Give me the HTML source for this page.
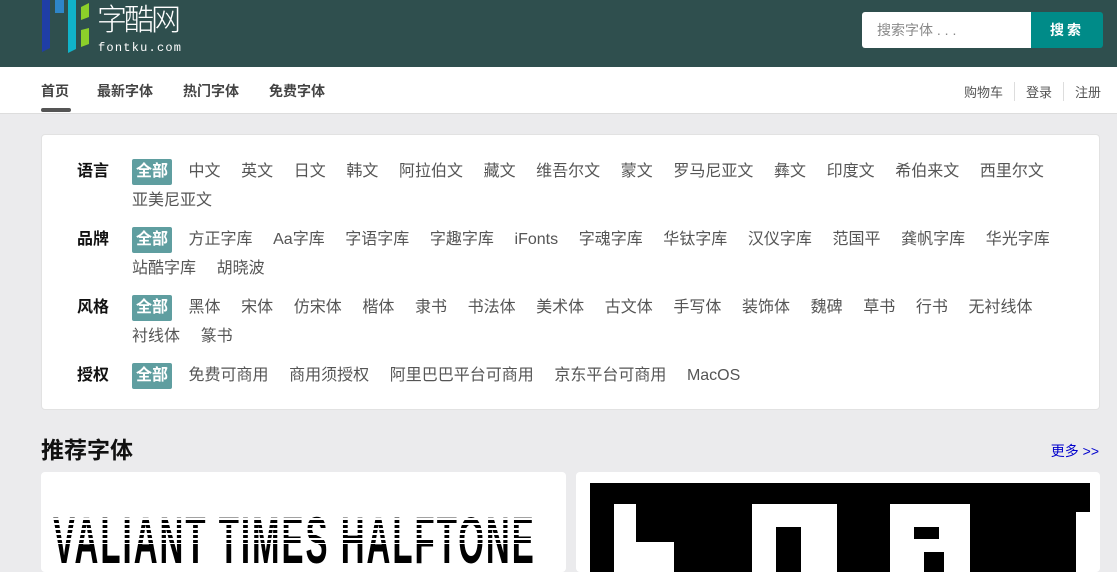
<!DOCTYPE html>
<html><head><meta charset="utf-8"><style>
*{margin:0;padding:0;box-sizing:border-box}
body{width:1117px;height:568px;overflow:hidden;background:#ebebed;font-family:"Liberation Sans","Noto Sans CJK SC",sans-serif}
.top{height:67px;background:#2f4f4e;position:relative}
.logo{position:absolute;left:40px;top:0}
.search{position:absolute;left:862px;top:12px;width:241px;height:36px;border-radius:3px;overflow:hidden;display:flex}
.search .in{width:169px;background:#fff;color:#888;font-size:14px;line-height:36px;padding-left:15px}
.search .bt{flex:1;background:#008b88;color:#fff;font-weight:bold;font-size:14px;line-height:36px;text-align:center;letter-spacing:3px}
.nav{height:47px;background:#fff;position:relative;border-bottom:1px solid #ddd}
.nav a{position:absolute;top:14px;font-size:14px;font-weight:bold;color:#444}
.nav .u{position:absolute;left:41px;top:41px;width:30px;height:4px;border-radius:2px;background:#555}
.nr{position:absolute;right:16px;top:15px;font-size:13px;color:#555;display:flex}
.nr span{padding:0 11px;border-left:1px solid #ddd}
.nr span:first-child{border:none}
.nr span:last-child{padding-right:0}
.card{position:absolute;left:41px;top:134px;width:1059px;height:276px;background:#fff;border-radius:4px;border:1px solid #e2e2e2}
.row{position:absolute;left:35px;display:flex}
.row b{width:55px;font-size:16px;line-height:29px;color:#111}
.items{width:950px;font-size:16px;line-height:29px;color:#555}
.items span{margin-right:20.6px;white-space:nowrap;display:inline-block}
.items .on{background:#5f9ea0;color:#fff;font-weight:bold;padding:0 4px;border-radius:2px;margin-right:16.5px;line-height:26px}
h2{position:absolute;left:41px;top:431px;font-size:23px;color:#111}
.more{position:absolute;right:18px;top:441px;font-size:14px;color:#00c}
.c1{position:absolute;left:41px;top:472px;width:525px;height:100px;background:#fff;border-radius:4px;overflow:hidden}
.c2{position:absolute;left:576px;top:472px;width:524px;height:100px;background:#fff;border-radius:4px;overflow:hidden}
</style></head><body>
<div class="top">
<svg class="logo" width="150" height="55" viewBox="0 0 150 55">
<polygon points="2,0 10,0 10,48 2,52" fill="#1f3ea6"/>
<polygon points="15,0 24,0 24,13 15,13" fill="#2e86c9"/>
<polygon points="28,0 36,0 36,49 28,53" fill="#10b3c9"/>
<polygon points="41,7 49,3 49,17 41,20" fill="#8ccf2a"/>
<polygon points="41,30 49,28 49,44 41,47" fill="#8ccf2a"/>
<text x="57" y="30" font-size="30" fill="#fff" font-family="Noto Sans CJK SC,sans-serif" font-weight="300" textLength="84">字酷网</text>
<text x="58" y="51" font-size="12" fill="#fff" font-family="Liberation Mono,monospace" textLength="83">fontku.com</text>
</svg>
<div class="search"><div class="in">搜索字体 . . .</div><div class="bt">搜索</div></div>
</div>
<div class="nav">
<a style="left:41px">首页</a><a style="left:97px">最新字体</a><a style="left:183px">热门字体</a><a style="left:269px">免费字体</a>
<div class="u"></div>
<div class="nr"><span>购物车</span><span>登录</span><span>注册</span></div>
</div>
<div class="card">
<div class="row" style="top:22px"><b>语言</b><div class="items"><span class="on">全部</span><span>中文</span><span>英文</span><span>日文</span><span>韩文</span><span>阿拉伯文</span><span>藏文</span><span>维吾尔文</span><span>蒙文</span><span>罗马尼亚文</span><span>彝文</span><span>印度文</span><span>希伯来文</span><span>西里尔文</span><span>亚美尼亚文</span></div></div>
<div class="row" style="top:90px"><b>品牌</b><div class="items"><span class="on">全部</span><span>方正字库</span><span>Aa字库</span><span>字语字库</span><span>字趣字库</span><span>iFonts</span><span>字魂字库</span><span>华钛字库</span><span>汉仪字库</span><span>范国平</span><span>龚帆字库</span><span>华光字库</span><span>站酷字库</span><span>胡晓波</span></div></div>
<div class="row" style="top:158px"><b>风格</b><div class="items"><span class="on">全部</span><span>黑体</span><span>宋体</span><span>仿宋体</span><span>楷体</span><span>隶书</span><span>书法体</span><span>美术体</span><span>古文体</span><span>手写体</span><span>装饰体</span><span>魏碑</span><span>草书</span><span>行书</span><span>无衬线体</span><span>衬线体</span><span>篆书</span></div></div>
<div class="row" style="top:226px"><b>授权</b><div class="items"><span class="on">全部</span><span>免费可商用</span><span>商用须授权</span><span>阿里巴巴平台可商用</span><span>京东平台可商用</span><span>MacOS</span></div></div>
</div>
<h2>推荐字体</h2>
<div class="more">更多 &gt;&gt;</div>
<div class="c1"><div style="position:absolute;left:12px;top:30px;font:bold 66px 'Liberation Sans',sans-serif;transform:scaleX(0.5);transform-origin:left;white-space:nowrap;letter-spacing:4px;color:#000">VALIANT TIMES HALFTONE</div>
<div style="position:absolute;left:0;top:38px;width:525px;height:34px;background:repeating-linear-gradient(transparent 0 3px,#fff 3px 5px)"></div></div>
<div class="c2"><div style="position:absolute;left:14px;top:11px;width:500px;height:100px;background:#000"></div>
<div style="position:absolute;left:38px;top:32px;width:22px;height:70px;background:#fff"></div>
<div style="position:absolute;left:38px;top:70px;width:60px;height:40px;background:#fff"></div>
<div style="position:absolute;left:176px;top:32px;width:85px;height:70px;background:#fff"></div>
<div style="position:absolute;left:200px;top:55px;width:25px;height:50px;background:#000"></div>
<div style="position:absolute;left:314px;top:32px;width:80px;height:70px;background:#fff"></div>
<div style="position:absolute;left:338px;top:55px;width:25px;height:12px;background:#000"></div>
<div style="position:absolute;left:348px;top:80px;width:20px;height:30px;background:#000"></div>
<div style="position:absolute;left:500px;top:40px;width:14px;height:60px;background:#fff"></div>
</div>
</body></html>
